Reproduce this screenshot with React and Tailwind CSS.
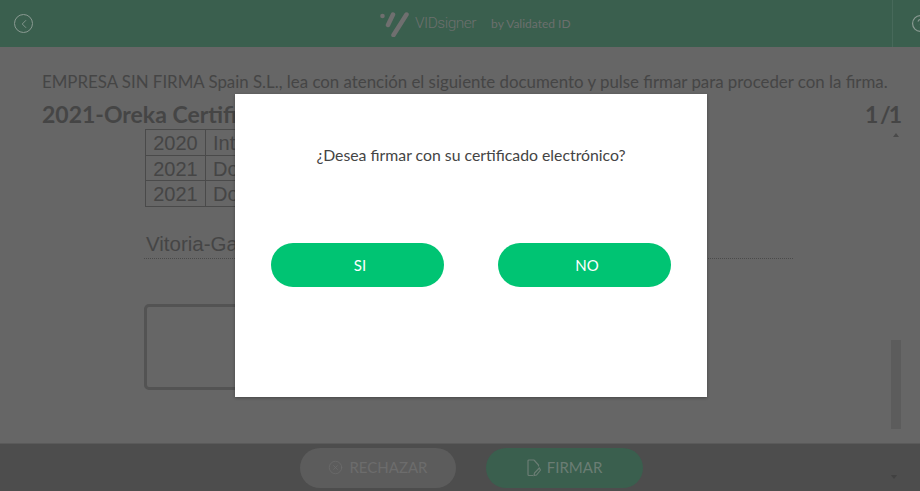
import { ChevronLeft, CircleHelp, CircleX } from 'lucide-react';

const rows = [
  ['2020', 'Inte'],
  ['2021', 'Doc'],
  ['2021', 'Doc'],
];

function Logo() {
  return (
    <svg width="30" height="26" viewBox="0 0 30 26" className="shrink-0">
      <circle cx="2.5" cy="5" r="2.3" fill="#6f6f6f" />
      <path d="M13 3.5 L8 14 M26.5 3.5 L13.5 24" stroke="#6f6f6f" strokeWidth="4.5" strokeLinecap="round" fill="none" />
    </svg>
  );
}

function SignIcon() {
  return (
    <svg width="14" height="18" viewBox="0 0 14 18" fill="none" stroke="#6b7d74" strokeWidth="1.2" className="shrink-0">
      <path d="M7 1 H2 a1 1 0 0 0 -1 1 V15.5 a1 1 0 0 0 1 1 H6" />
      <path d="M7 1 L11.5 6 V7.5" />
      <path d="M12.3 9 L7.5 14 L7 16.5 L9.5 16 L13.5 11 Z" />
    </svg>
  );
}

export default function App() {
  return (
    <div className="relative flex h-[491px] w-[920px] flex-col overflow-hidden bg-[#666666] font-['Lato',sans-serif]">
      {/* Header */}
      <header className="flex h-[47px] shrink-0 items-center bg-[#3a5f4e]">
        <div className="flex h-full w-[893px] shrink-0 items-center border-r border-[#47695a] pl-[14px]">
          <div className="flex h-[19px] w-[19px] items-center justify-center rounded-full border border-[#8a9a92]">
            <ChevronLeft size={14} strokeWidth={1.5} className="text-[#8a9a92]" />
          </div>
          <div className="ml-[347px] flex items-center pt-[1px]">
            <Logo />
            <span className="ml-[5px] font-['Roboto',sans-serif] text-[15.5px] font-light tracking-[-0.5px] text-[#6b6f6d]">VIDsigner</span>
            <span className="ml-[15px] text-[12px] text-[#6b6f6d]">by Validated ID</span>
          </div>
        </div>
        <CircleHelp size={19} strokeWidth={1.5} className="ml-[18px] shrink-0 text-[#8a9a92]" />
      </header>

      {/* Document area */}
      <main className="flex min-h-0 flex-1 flex-col pl-[42px] pr-[20px] pt-[25px]">
        <p className="whitespace-nowrap text-[16.85px] leading-5 text-[#454545]">
          EMPRESA SIN FIRMA Spain S.L., lea con atención el siguiente documento y pulse firmar para proceder con la firma.
        </p>
        <div className="mt-[8px] flex items-center justify-between">
          <h1 className="text-[23px] font-bold leading-7 text-[#454545]">2021-Oreka Certificado</h1>
          <span className="text-[23px] font-bold leading-7 tracking-[-2px] text-[#454545]">1 /1</span>
        </div>

        <div className="flex min-h-0 flex-1">
          <div className="w-[750px] pl-[103px] pt-[1px] font-['Liberation_Sans',sans-serif] text-[20px] text-[#454545]">
            <div className="w-[180px] border-t border-l border-[#4a4a4a]">
              {rows.map((row, i) => (
                <div key={i} className="flex h-[25.7px] items-center border-b border-[#4a4a4a] leading-none">
                  <span className="w-[60px] self-stretch border-r border-[#4a4a4a] pt-[3px] text-center">{row[0]}</span>
                  <span className="pl-[7px] pt-[1px]">{row[1]}</span>
                </div>
              ))}
            </div>
            <div className="mt-[24px] -ml-[1px] w-[649px] border-b border-dotted border-[#4a4a4a] pb-[1px] pl-[2px] text-[20.5px] leading-[26px]">
              Vitoria-Gasteiz
            </div>
            <div className="mt-[45px] -ml-[1px] h-[86px] w-[300px] rounded-[5px] border-[3px] border-[#535353]" />
          </div>
          <div className="ml-auto -mr-[1px] flex w-[10px] flex-col items-center pt-[5px]">
            <div className="h-0 w-0 border-x-[3px] border-b-[4px] border-x-transparent border-b-[#4a4a4a]" />
            <div className="mt-auto mb-[14px] h-[89px] w-[10px] bg-[#5c5c5c]" />
          </div>
        </div>
      </main>

      {/* Footer actions */}
      <footer className="relative flex h-[48px] shrink-0 items-center gap-[30px] border-t border-[#5a5a5a] bg-[#4d4d4d] pl-[300px]">
        <button className="flex h-[40px] w-[156px] items-center justify-center gap-[6px] rounded-full bg-[#5c5c5c] text-[15px] text-[#6c6c6c]">
          <CircleX size={15} strokeWidth={1.2} />
          RECHAZAR
        </button>
        <button className="flex h-[40px] w-[157px] items-center justify-center gap-[6px] rounded-full bg-[#3a5f4e] text-[15px] text-[#6b7d74]">
          <SignIcon />
          FIRMAR
        </button>
        <div className="absolute right-[23px] top-[31px] h-0 w-0 border-x-[3px] border-t-[4px] border-x-transparent border-t-[#414141]" />
      </footer>

      {/* Dialog */}
      <div className="absolute left-[235px] top-[94px] flex h-[303px] w-[472px] flex-col items-center bg-white shadow-[0_1px_3px_rgba(0,0,0,0.3)]">
        <p className="mt-[49px] text-[15.8px] leading-6 text-[#444444]">¿Desea firmar con su certificado electrónico?</p>
        <div className="mt-[76px] flex gap-[54px]">
          <button className="h-[44px] w-[173px] rounded-full bg-[#00c473] pl-[5px] text-[15px] text-white">SI</button>
          <button className="h-[44px] w-[173px] rounded-full bg-[#00c473] pl-[5px] text-[15px] text-white">NO</button>
        </div>
      </div>
    </div>
  );
}
